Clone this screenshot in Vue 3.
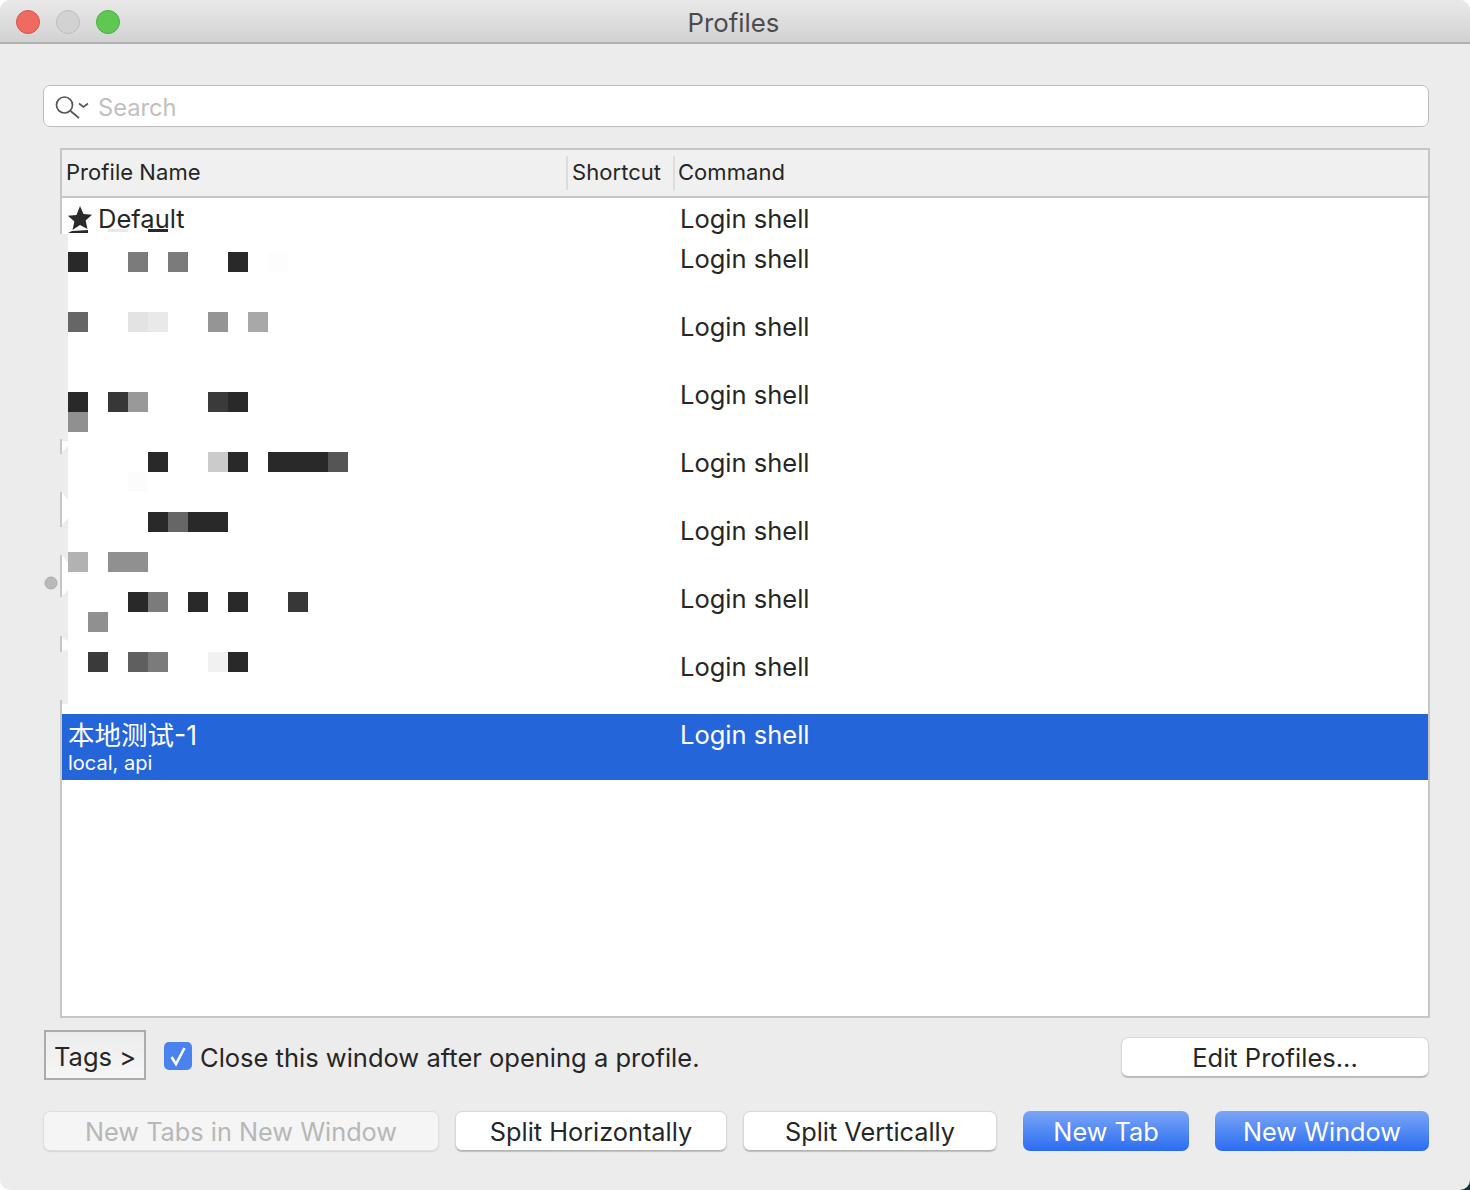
<script setup>
const rows = [
  { name: 'Default', star: true, cls: 'first' },
  { name: '' }, { name: '' }, { name: '' }, { name: '' }, { name: '' }, { name: '' }, { name: '' },
]
const c = ['#292929', '#7b7b7b', '#666', '#e3e3e3', '#e9e9e9', '#959595', '#a8a8a8', '#373737', '#999', '#909090', '#cbcbcb', '#555', '#b2b2b2', '#f1f1f1', '#fdfdfd', '#5f5f5f', '#3a3a3a', '#fcfcfc']
const blocks = [
  [68,252,c[0]],[128,252,c[1]],[168,252,c[1]],[228,252,c[0]],[268,252,c[14]],
  [68,312,c[2]],[128,312,c[3]],[148,312,c[4]],[208,312,c[5]],[248,312,c[6]],
  [68,392,c[0]],[108,392,c[7]],[128,392,c[8]],[208,392,c[16]],[228,392,c[0]],[68,412,c[9]],
  [148,452,c[0]],[208,452,c[10]],[228,452,c[0]],[268,452,c[0]],[288,452,c[0]],[308,452,c[0]],[328,452,c[11]],[128,472,c[17]],
  [148,512,c[0]],[168,512,c[2]],[188,512,c[0]],[208,512,c[0]],
  [68,552,c[12]],[108,552,c[9]],[128,552,c[9]],
  [128,592,c[0]],[148,592,c[1]],[188,592,c[0]],[228,592,c[0]],[288,592,c[7]],[88,612,c[9]],
  [88,652,c[16]],[128,652,c[15]],[148,652,c[1]],[208,652,c[13]],[228,652,c[0]],
]
</script>

<template>
  <div class="window">
    <header class="titlebar">
      <div class="lights">
        <i class="light red"></i><i class="light gray"></i><i class="light green"></i>
      </div>
      <span class="title">Profiles</span>
    </header>

    <div class="search">
      <svg class="search-icon" width="34" height="24" viewBox="0 0 34 24" fill="none" stroke="#555">
        <circle cx="9.500" cy="10" r="8" stroke-width="1.700"/>
        <path d="M15.500 16 L24 23" stroke-width="1.700"/>
        <path d="M24 8.500 L28.500 12 L33 8.500" stroke-width="1.600"/>
      </svg>
      <span class="placeholder">Search</span>
    </div>

    <section class="table">
      <div class="thead">
        <div class="th c1">Profile Name</div>
        <div class="th c2">Shortcut</div>
        <div class="th c3">Command</div>
      </div>
      <div class="tbody">
        <div v-for="(r, i) in rows" :key="i" class="row" :class="r.cls">
          <div class="name">
            <svg v-if="r.star" class="star" width="26" height="26" viewBox="0 0 26 26"><path fill="#2a2a2a" d="M13 1l3.500 7.900 8.600.9-6.500 5.700 1.900 8.500L13 20.100 5.500 25l1.900-8.500-6.500-5.700 8.600-.9z"/></svg>
            <span>{{ r.name }}</span>
          </div>
          <div class="cmd">Login shell</div>
        </div>
        <div class="row selected">
          <div class="name stacked">
            <span class="zh">本地测试-1</span>
            <span class="tags">local, api</span>
          </div>
          <div class="cmd">Login shell</div>
        </div>
      </div>
    </section>

    <div class="options">
      <button class="tags-btn">Tags &gt;</button>
      <label class="check">
        <span class="box">
          <svg width="28" height="28" viewBox="0 0 28 28" fill="none"><path d="M7.500 15 L12 22 L20.500 6" stroke="#fff" stroke-width="2.600"/></svg>
        </span>
        <span class="check-label">Close this window after opening a profile.</span>
      </label>
      <button class="btn edit">Edit Profiles...</button>
    </div>

    <div class="actions">
      <button class="btn disabled w1">New Tabs in New Window</button>
      <button class="btn w2">Split Horizontally</button>
      <button class="btn w3">Split Vertically</button>
      <button class="btn primary w4">New Tab</button>
      <button class="btn primary w5">New Window</button>
    </div>

    <svg class="mosaic" width="400" height="520" viewBox="0 200 400 520">
      <rect x="0" y="234" width="68" height="470" fill="#ececec"/>
      <path d="M72 231 L88 230 L88 233 L68 233Z" fill="#292929"/>
      <rect x="108" y="229" width="20" height="3" fill="#e9e9e9"/>
      <rect x="148" y="229" width="20" height="3" fill="#292929"/>
      <g fill="#c6c6c6">
        <rect x="60" y="229" width="2" height="5"/>
        <rect x="60" y="439" width="2" height="15"/>
        <rect x="60" y="492" width="2" height="35"/>
        <rect x="60" y="555" width="2" height="42"/>
        <rect x="60" y="636" width="2" height="16"/>
        <rect x="60" y="700" width="2" height="14"/>
      </g>
      <g fill="#fff">
        <path d="M62 441 L68 441 L68 446 L62 452Z"/>
        <path d="M62 492 L68 500 L68 518 L62 525Z"/>
        <path d="M62 555 L68 563 L68 590 L62 596Z"/>
        <path d="M62 638 L68 641 L68 650 L62 651Z"/>
        <rect x="62" y="704" width="6" height="10"/>
      </g>
      <circle cx="51" cy="583" r="6" fill="#b9b9b9" stroke="#a9a9a9"/>
      <rect v-for="(b, i) in blocks" :key="i" :x="b[0]" :y="b[1]" width="20" height="20" :fill="b[2]"/>
    </svg>
  </div>
</template>

<style>
html {
  background: linear-gradient(#12303f, #12303f) right bottom / 10px 10px no-repeat, #fff;
}
body { margin: 0; }
</style>

<style scoped>
.window {
  position: relative;
  width: 1470px;
  height: 1190px;
  box-sizing: border-box;
  overflow: hidden;
  background: #ececec;
  border-radius: 10px;
  font-family: Inter, "Noto Sans CJK SC", sans-serif;
  color: #262626;
  font-size: 25.500px;
  --line: #c6c6c6;
}
.titlebar {
  height: 44px;
  box-sizing: border-box;
  display: flex;
  align-items: center;
  justify-content: center;
  position: relative;
  background: linear-gradient(#e9e9e9, #d2d2d2);
  border-bottom: 2px solid #b1b1b1;
}
.title { font-size: 25.800px; color: #4c4c4c; margin: 2px 3px 0 0; }
.lights {
  position: absolute;
  left: 16px;
  top: 10px;
  display: flex;
  gap: 16px;
}
.light {
  width: 24px;
  height: 24px;
  border-radius: 50%;
  box-sizing: border-box;
  border: 1px solid;
}
.red { background: #ef6a5f; border-color: #d9534a; }
.gray { background: #d2d2d2; border-color: #bdbdbd; }
.green { background: #5fc853; border-color: #4aae41; }
.search {
  margin: 41px 41px 0 43px;
  height: 42px;
  box-sizing: border-box;
  display: flex;
  align-items: center;
  background: #fff;
  border: 1px solid #bcbcbc;
  border-radius: 7px;
  padding-left: 11px;
}
.search-icon { flex: none; margin-right: 9px; margin-top: 1px; }
.placeholder { color: #bfbfbf; font-size: 23.700px; padding-top: 3px; }
.table {
  margin: 21px 40px 0 60px;
  height: 870px;
  box-sizing: border-box;
  border: 2px solid var(--line);
  background: #fff;
  display: flex;
  flex-direction: column;
  overflow: hidden;
}
.thead {
  height: 48px;
  flex: none;
  box-sizing: border-box;
  display: flex;
  align-items: center;
  background: #f0f0f0;
  border-bottom: 2px solid var(--line);
  font-size: 22px;
  letter-spacing: 0.05px;
}
.th { height: 34px; line-height: 32px; box-sizing: border-box; padding-left: 4px; }
.c1 { width: 504px; }
.c2 { width: 107px; border-left: 2px solid #dcdcdc; }
.c3 { border-left: 2px solid #dcdcdc; padding-left: 3px; }
.row {
  height: 68px;
  display: flex;
  box-sizing: border-box;
}
.first { height: 40px; }
.name {
  width: 618px;
  flex: none;
  display: flex;
  align-items: center;
  height: 40px;
  padding-left: 5px;
  box-sizing: border-box;
  gap: 5px;
}
.star { flex: none; margin-top: -1px; }
.cmd { height: 40px; line-height: 42px; }
.selected {
  height: 66px;
  background: #2565da;
  color: #fff;
}
.stacked {
  flex-direction: column;
  align-items: flex-start;
  gap: 0;
  height: 66px;
  padding-left: 6px;
}
.zh { line-height: 42px; height: 37px; font-size: 26.500px; }
.tags { font-size: 20px; line-height: 24px; }
.options {
  display: flex;
  align-items: flex-start;
  margin: 12px 41px 0 44px;
  height: 50px;
}
button { font: inherit; color: inherit; padding: 0; margin: 0; }
.tags-btn {
  width: 102px;
  height: 50px;
  background: linear-gradient(#ececec, #f6f6f6);
  border: 2px solid #ababab;
  padding-top: 2px;
}
.check {
  display: flex;
  align-items: flex-start;
  margin: 12px 0 0 18px;
}
.check-label { line-height: 28px; padding-top: 2px; }
.box {
  width: 28px;
  height: 28px;
  margin-right: 8px;
  border-radius: 5px;
  background: #4a83f0;
  display: flex;
  align-items: center;
  justify-content: center;
}
.btn {
  height: 40px;
  box-sizing: border-box;
  background: #fff;
  border: 1px solid #d8d8d8;
  border-bottom-color: #b4b4b4;
  border-radius: 7px;
  box-shadow: 0 1px 1px #bdbdbd;
}
.edit { width: 308px; margin: 7px 0 0 auto; }
.actions {
  display: flex;
  margin: 31px 41px 0 43px;
  font-size: 25.300px;
}
.w1 { width: 396px; }
.w2 { width: 272px; margin-left: 16px; }
.w3 { width: 254px; margin-left: 16px; }
.w4 { width: 166px; margin-left: 26px; }
.w5 { width: 214px; margin-left: 26px; }
.disabled {
  background: #f5f5f5;
  color: #b7b7b7;
  border-color: #dedede;
  box-shadow: 0 1px 1px #d6d6d6;
}
.primary {
  background: linear-gradient(#7ba6f5, #2a6cf2);
  color: #fff;
  border: none;
  box-shadow: none;
}
.mosaic {
  position: absolute;
  left: 0;
  top: 200px;
}
</style>
